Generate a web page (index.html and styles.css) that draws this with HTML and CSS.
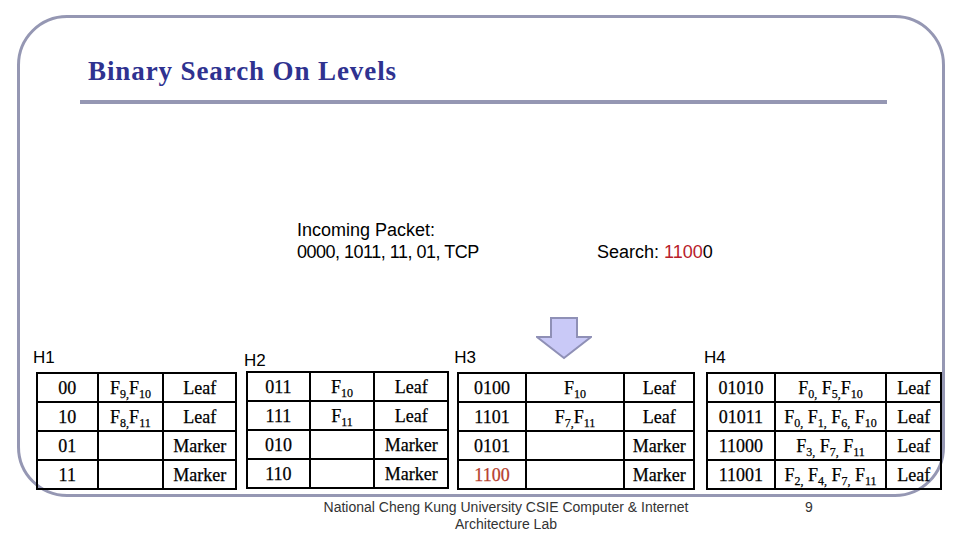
FILE: index.html
```html
<!DOCTYPE html>
<html>
<head>
<meta charset="utf-8">
<link rel="stylesheet" href="styles.css">
</head>
<body>
<div class="slide">
  <div class="header">
    <h1 class="title">Binary Search On Levels</h1>
    <div class="title-bar"></div>
  </div>

  <div class="packet-row">
    <div class="packet">
      <div>Incoming Packet:</div>
      <div class="packet-bits">0000, 1011, 11, 01, TCP</div>
    </div>
    <div class="search">Search: <span class="hit">1100</span>0</div>
  </div>

  <div class="arrow">
    <svg width="56" height="44" viewBox="0 0 56 44">
      <polygon points="15,1 41,1 41,20 55,20 28,41 1,20 15,20" fill="#c9c9f7" stroke="#8f90b6" stroke-width="2" stroke-linejoin="miter"/>
    </svg>
  </div>

  <div class="levels">
    <div class="level l1">
      <div class="label">H1</div>
      <table class="tbl">
        <colgroup><col style="width:61px"><col style="width:66px"><col style="width:73px"></colgroup>
        <tr><td>00</td><td>F<sub>9,</sub>F<sub>10</sub></td><td>Leaf</td></tr>
        <tr><td>10</td><td>F<sub>8,</sub>F<sub>11</sub></td><td>Leaf</td></tr>
        <tr><td>01</td><td></td><td>Marker</td></tr>
        <tr><td>11</td><td></td><td>Marker</td></tr>
      </table>
    </div>
    <div class="level l2">
      <div class="label">H2</div>
      <table class="tbl">
        <colgroup><col style="width:63px"><col style="width:65px"><col style="width:74px"></colgroup>
        <tr><td>011</td><td>F<sub>10</sub></td><td>Leaf</td></tr>
        <tr><td>111</td><td>F<sub>11</sub></td><td>Leaf</td></tr>
        <tr><td>010</td><td></td><td>Marker</td></tr>
        <tr><td>110</td><td></td><td>Marker</td></tr>
      </table>
    </div>
    <div class="level l3">
      <div class="label">H3</div>
      <table class="tbl">
        <colgroup><col style="width:68px"><col style="width:99px"><col style="width:70px"></colgroup>
        <tr><td>0100</td><td>F<sub>10</sub></td><td>Leaf</td></tr>
        <tr><td>1101</td><td>F<sub>7,</sub>F<sub>11</sub></td><td>Leaf</td></tr>
        <tr><td>0101</td><td></td><td>Marker</td></tr>
        <tr><td class="match">1100</td><td></td><td>Marker</td></tr>
      </table>
    </div>
    <div class="level l4">
      <div class="label">H4</div>
      <table class="tbl">
        <colgroup><col style="width:68px"><col style="width:112px"><col style="width:55px"></colgroup>
        <tr><td>01010</td><td>F<sub>0,</sub> F<sub>5,</sub>F<sub>10</sub></td><td>Leaf</td></tr>
        <tr><td>01011</td><td>F<sub>0,</sub> F<sub>1,</sub> F<sub>6,</sub> F<sub>10</sub></td><td>Leaf</td></tr>
        <tr><td>11000</td><td>F<sub>3,</sub> F<sub>7,</sub> F<sub>11</sub></td><td>Leaf</td></tr>
        <tr><td>11001</td><td>F<sub>2,</sub> F<sub>4,</sub> F<sub>7,</sub> F<sub>11</sub></td><td>Leaf</td></tr>
      </table>
    </div>
  </div>
</div>

<div class="footer">
  <div class="footer-text">National Cheng Kung University CSIE Computer &amp; Internet Architecture Lab</div>
  <div class="page-num">9</div>
</div>
</body>
</html>
```

FILE: styles.css
```css
html, body {
  margin: 0;
  padding: 0;
  background: #ffffff;
}

body {
  width: 960px;
  height: 540px;
  overflow: hidden;
  font-family: "Liberation Sans", Arial, sans-serif;
  color: #000;
}

.slide {
  box-sizing: border-box;
  width: 928px;
  height: 482px;
  margin: 15px 0 0 17px;
  border: 3px solid #9597b3;
  border-radius: 50px;
}

.header {
  padding-top: 38px;
}

.title {
  margin: 0 0 0 68px;
  font-family: "Liberation Serif", "Times New Roman", serif;
  font-weight: bold;
  font-size: 27px;
  line-height: 30px;
  letter-spacing: 0.9px;
  color: #2f3290;
}

.title-bar {
  margin: 14px 0 0 60px;
  width: 807px;
  height: 4px;
  background: #9597b3;
}

.packet-row {
  display: flex;
  align-items: flex-end;
  margin: 115px 0 0 277px;
  font-size: 18px;
  line-height: 22px;
}

.packet {
  width: 300px;
}

.packet-bits {
  letter-spacing: -0.5px;
}

.hit {
  color: #b8202a;
}

.arrow {
  margin: 54px 0 -11px 516px;
  height: 42px;
}

.arrow svg {
  display: block;
}

.levels {
  display: flex;
  align-items: flex-start;
  padding-left: 16px;
}

.level {
  display: flex;
  flex-direction: column;
}

.l2 { margin-left: 9px; }
.l3 { margin-left: 8px; }
.l4 { margin-left: 11px; }

.label {
  font-size: 17px;
  line-height: 20px;
  height: 20px;
  margin: 0 0 4px -3px;
}

.l2 .label {
  margin: 3px 0 0 -2px;
}

.l4 .label {
  margin-left: -2px;
}

.tbl {
  border-collapse: collapse;
  table-layout: fixed;
  font-family: "Liberation Serif", "Times New Roman", serif;
  font-size: 18px;
  border: 2px solid #000;
}

.tbl td {
  border: 2px solid #000;
  height: 27px;
  padding: 0;
  text-align: center;
  vertical-align: middle;
  white-space: nowrap;
  line-height: 20px;
  -webkit-text-stroke: 0.25px currentColor;
}

.tbl sub {
  font-size: 12px;
  line-height: 0;
  vertical-align: -4px;
}

.tbl td.match {
  color: #b5402c;
}

.footer {
  display: flex;
  align-items: flex-start;
  margin-top: 2px;
  font-size: 14px;
  line-height: 17px;
  color: #333;
}

.footer-text {
  width: 372px;
  margin-left: 320px;
  text-align: center;
}

.page-num {
  margin-left: 113px;
}
```
